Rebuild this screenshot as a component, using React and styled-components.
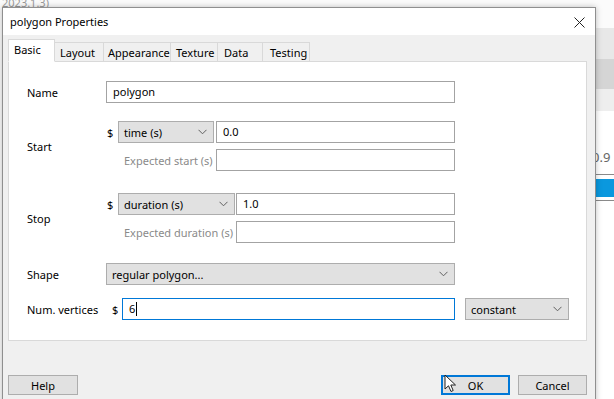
import React from "react";
import styled, { createGlobalStyle } from "styled-components";

const GlobalStyle = createGlobalStyle`
  html, body { margin: 0; padding: 0; }
  body {
    font-family: "Noto Sans", "Open Sans", sans-serif;
    font-size: 11px;
    color: #000;
    background: #f7f7f7;
  }
`;

const Page = styled.div`
  position: relative;
  width: 614px;
  height: 399px;
  overflow: hidden;
  background: #fbfbfb;
`;

// the main application window behind the dialog
const BackApp = styled.div`
  display: flex;
  height: 100%;
`;

const BackCaption = styled.div`
  flex: 1;
  color: #9a9a9a;
  font-size: 11px;
  line-height: 12px;
  margin-top: -3px;
  padding-left: 2px;
`;

const BackSide = styled.div`
  width: 18px;
  display: flex;
  flex-direction: column;
`;

const SideBand = styled.div`
  height: ${(p) => p.h}px;
  background: ${(p) => p.bg || "transparent"};
  border-top: ${(p) => (p.line ? "1px solid #8a8a8a" : "none")};
  color: #666;
  font-size: 13px;
  line-height: ${(p) => p.h}px;
  margin-left: ${(p) => p.shift || 0}px;
`;

const Dialog = styled.div`
  position: absolute;
  left: 2px;
  top: 7px;
  width: 592px;
  height: 400px;
  border: 1px solid #8f8f8f;
  background: #f0f0f0;
  box-shadow: 0 0 6px rgba(0, 0, 0, 0.25);
  display: flex;
  flex-direction: column;
`;

const TitleBar = styled.div`
  height: 27px;
  background: #fff;
  display: flex;
  align-items: center;
  justify-content: space-between;
  padding: 0 10px 0 7px;
  font-size: 11px;
`;

const CloseBtn = styled.div`
  width: 12px;
  height: 12px;
  display: flex;
  align-items: center;
  justify-content: center;
  margin-top: 1px;
`;

const Body = styled.div`
  padding: 6px 8px 0 5px;
  display: flex;
  flex-direction: column;
`;

const TabBar = styled.div`
  display: flex;
  align-items: flex-end;
  height: 21px;
  position: relative;
  z-index: 1;
  margin-bottom: -1px;
`;

const Tab = styled.div`
  box-sizing: border-box;
  width: ${(p) => p.w}px;
  height: ${(p) => (p.active ? 23 : 20)}px;
  background: ${(p) => (p.active ? "#fff" : "#f0f0f0")};
  border: 1px solid #d9d9d9;
  border-bottom: ${(p) => (p.active ? "1px solid #fff" : "1px solid #d9d9d9")};
  border-left: ${(p) => (p.first || p.active ? "1px solid #d9d9d9" : "none")};
  padding-left: ${(p) => p.pad}px;
  line-height: ${(p) => (p.active ? 20 : 19)}px;
  white-space: nowrap;
`;

const Panel = styled.div`
  box-sizing: border-box;
  height: 280px;
  background: #fff;
  border: 1px solid #d9d9d9;
  padding: 19px 0 0 18px;
  display: grid;
  grid-template-columns: 79px 349px 10px 104px;
  align-content: start;
`;

const Label = styled.div`
  grid-column: 1;
  display: flex;
  align-items: center;
  margin-top: ${(p) => p.mt || 0}px;
`;

const Field = styled.div`
  grid-column: ${(p) => p.col || 2};
  margin-top: ${(p) => p.mt || 0}px;
  display: flex;
  flex-direction: column;
  gap: 6px;
`;

const Line = styled.div`
  display: flex;
  align-items: center;
`;

const Dollar = styled.span`
  width: ${(p) => p.w || 12}px;
  padding-left: ${(p) => p.pl || 1}px;
  box-sizing: border-box;
  flex-shrink: 0;
`;

const TextBox = styled.div`
  box-sizing: border-box;
  flex: 1;
  height: 22px;
  margin-left: ${(p) => p.ml || 0}px;
  border: 1px solid ${(p) => (p.focused ? "#0078d7" : "#a3a3a3")};
  background: #fff;
  padding-left: 6px;
  line-height: 20px;
  display: flex;
  align-items: center;
`;

const Caret = styled.span`
  display: inline-block;
  width: 1px;
  height: 14px;
  background: #000;
  margin-left: 1px;
`;

const Combo = styled.div`
  box-sizing: border-box;
  width: ${(p) => (p.w ? `${p.w}px` : "100%")};
  flex-shrink: 0;
  height: 22px;
  background: #e1e1e1;
  border: 1px solid #adadad;
  padding: 0 6px 0 5px;
  display: flex;
  align-items: center;
  justify-content: space-between;
  white-space: nowrap;
`;

const HintLabel = styled.span`
  width: ${(p) => p.w}px;
  flex-shrink: 0;
  box-sizing: border-box;
  padding-left: 6px;
  color: #8a8a8a;
  white-space: nowrap;
`;

const Footer = styled.div`
  display: flex;
  align-items: center;
  padding-top: 34px;
  gap: 8px;
`;

const Button = styled.div`
  position: relative;
  box-sizing: border-box;
  width: ${(p) => p.w}px;
  height: 20px;
  margin-left: ${(p) => (p.push ? "auto" : "0")};
  background: #e1e1e1;
  border: ${(p) => (p.primary ? "2px solid #0078d7" : "1px solid #adadad")};
  display: flex;
  align-items: center;
  justify-content: center;
`;

const Cursor = styled.svg`
  position: absolute;
  left: 1px;
  top: -3px;
`;

const Chevron = () => (
  <svg width="9" height="6" viewBox="0 0 9 6">
    <polyline points="0.5,0.8 4.5,4.8 8.5,0.8" fill="none" stroke="#606060" strokeWidth="1" />
  </svg>
);

const tabs = [
  { name: "Basic", w: 47, pad: 5 },
  { name: "Layout", w: 49, pad: 5 },
  { name: "Appearance", w: 67, pad: 4 },
  { name: "Texture", w: 47, pad: 5 },
  { name: "Data", w: 45, pad: 6 },
  { name: "Testing", w: 47, pad: 7 },
];

export default function App() {
  return (
    <Page>
      <GlobalStyle />
      <BackApp>
        <BackCaption>2023.1.3)</BackCaption>
        <BackSide>
          <SideBand h={28} />
          <SideBand h={31} bg="#e8e8e8" />
          <SideBand h={31} bg="#d5d5d5" />
          <SideBand h={22} bg="#eeeeee" />
          <SideBand h={36} bg="#fff" />
          <SideBand h={20} bg="#fff" shift={-4}>0.9</SideBand>
          <SideBand h={7} bg="#fff" />
          <SideBand h={4} bg="#fff" line />
          <SideBand h={18} bg="#0a98de" />
          <SideBand h={3} bg="#fff" />
          <SideBand h={200} bg="#fff" line />
        </BackSide>
      </BackApp>

      <Dialog>
        <TitleBar>
          <span>polygon Properties</span>
          <CloseBtn>
            <svg width="11" height="11" viewBox="0 0 11 11">
              <path d="M0.5 0.5 L10.5 10.5 M10.5 0.5 L0.5 10.5" stroke="#222" strokeWidth="1" />
            </svg>
          </CloseBtn>
        </TitleBar>
        <Body>
          <TabBar>
            {tabs.map((t, i) => (
              <Tab key={t.name} w={t.w} pad={t.pad} active={i === 0} first={i === 0}>
                {t.name}
              </Tab>
            ))}
          </TabBar>
          <Panel>
            <Label>Name</Label>
            <Field>
              <TextBox>polygon</TextBox>
            </Field>

            <Label mt={18}>Start</Label>
            <Field mt={18}>
              <Line>
                <Dollar>$</Dollar>
                <Combo w={96}>
                  time (s) <Chevron />
                </Combo>
                <TextBox ml={2}>0.0</TextBox>
              </Line>
              <Line>
                <Dollar />
                <HintLabel w={98}>Expected start (s)</HintLabel>
                <TextBox>&nbsp;</TextBox>
              </Line>
            </Field>

            <Label mt={22}>Stop</Label>
            <Field mt={22}>
              <Line>
                <Dollar>$</Dollar>
                <Combo w={117}>
                  duration (s) <Chevron />
                </Combo>
                <TextBox ml={1}>1.0</TextBox>
              </Line>
              <Line>
                <Dollar />
                <HintLabel w={118}>Expected duration (s)</HintLabel>
                <TextBox>&nbsp;</TextBox>
              </Line>
            </Field>

            <Label mt={20}>Shape</Label>
            <Field mt={20}>
              <Combo>
                regular polygon... <Chevron />
              </Combo>
            </Field>

            <Label mt={13}>Num. vertices</Label>
            <Field mt={13}>
              <Line>
                <Dollar w={16} pl={6}>$</Dollar>
                <TextBox focused>
                  6<Caret />
                </TextBox>
              </Line>
            </Field>
            <Field col={4} mt={13}>
              <Combo>
                constant <Chevron />
              </Combo>
            </Field>
          </Panel>
          <Footer>
            <Button w={70}>Help</Button>
            <Button w={69} push primary>
              OK
              <Cursor width="13" height="20" viewBox="0 0 13 20">
                <path
                  d="M1 1 L1 15 L4.5 11.8 L7 17.5 L9.2 16.5 L6.8 11 L11.5 11 Z"
                  fill="#fff"
                  stroke="#222"
                  strokeWidth="1"
                  strokeLinejoin="round"
                />
              </Cursor>
            </Button>
            <Button w={69}>Cancel</Button>
          </Footer>
        </Body>
      </Dialog>
    </Page>
  );
}
